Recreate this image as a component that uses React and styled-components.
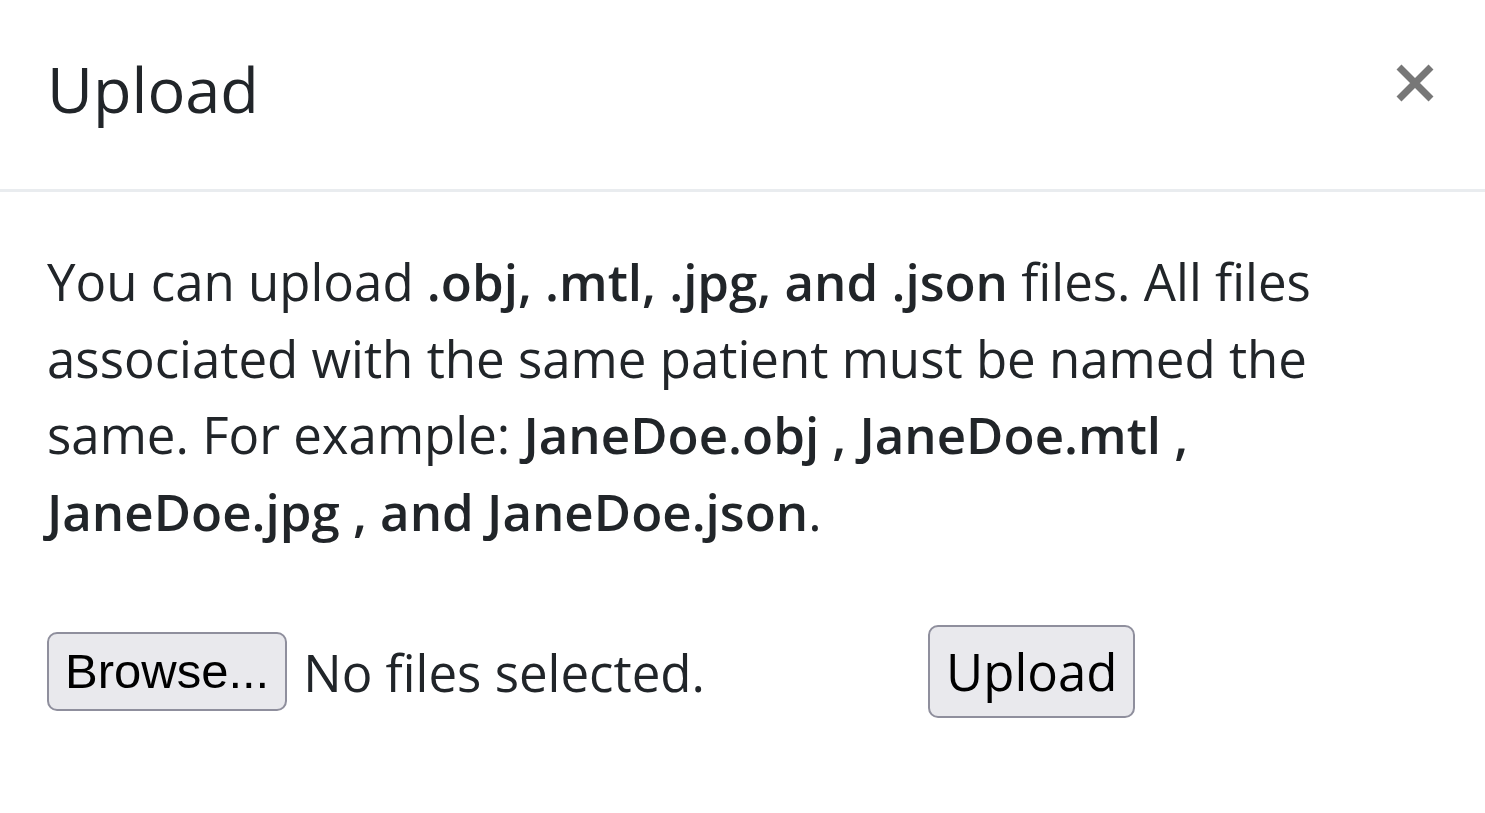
import React from 'react';
import styled, { createGlobalStyle } from 'styled-components';

const GlobalStyle = createGlobalStyle`
  html, body {
    margin: 0;
    padding: 0;
    background: #ffffff;
  }
  body {
    font-family: "Open Sans", "Noto Sans", sans-serif;
    color: #212529;
  }
`;

// Modal shell
const Modal = styled.div`
  width: 1485px;
  min-height: 813px;
  background: #fff;
`;

const Header = styled.header`
  display: flex;
  align-items: flex-start;
  justify-content: space-between;
  height: 192px;
  box-sizing: border-box;
  padding: 42px 50px 0 47px;
  border-bottom: 3px solid #e9ecef;
`;

const Title = styled.h5`
  margin: 0;
  font-size: 63px;
  font-weight: 400;
  line-height: 1.5;
  color: #212529;
`;

const CloseButton = styled.button`
  display: flex;
  align-items: center;
  justify-content: center;
  margin-top: 21px;
  padding: 0;
  border: 0;
  background: transparent;
  cursor: pointer;
`;

const Body = styled.div`
  padding: 51px 47px;
`;

const Text = styled.p`
  margin: 0;
  font-size: 51px;
  line-height: 1.5;
  max-width: 1300px;

  b {
    font-weight: 600;
  }
`;

const Form = styled.form`
  display: flex;
  align-items: center;
  margin-top: 76px;
`;

// Native-looking file input: grey button plus status label
const FileField = styled.label`
  display: flex;
  align-items: center;
  gap: 16px;
  width: 881px;
`;

const NativeButton = styled.button`
  box-sizing: border-box;
  height: ${p => p.$h}px;
  padding: 0 ${p => p.$px}px;
  border: 2px solid #8f8f9d;
  border-radius: 10px;
  background: #e9e9ed;
  color: #000;
  font-family: ${p => (p.$system ? '"Liberation Sans", Arial, sans-serif' : '"Open Sans", sans-serif')};
  font-size: ${p => p.$fs}px;
  line-height: 1;
  cursor: pointer;
`;

const Status = styled.span`
  font-size: 51px;
  color: #212529;
`;

const CloseIcon = () => (
  <svg width="40" height="40" viewBox="0 0 40 40">
    <path d="M4 4 L36 36 M36 4 L4 36" stroke="#777" strokeWidth="7" fill="none" />
  </svg>
);

const App = () => {
  return (
    <>
      <GlobalStyle />
      <Modal>
        <Header>
          <Title>Upload</Title>
          <CloseButton aria-label="Close">
            <CloseIcon />
          </CloseButton>
        </Header>
        <Body>
          <Text>
            You can upload <b>.obj, .mtl, .jpg, and .json</b> files. All files associated with the
            same patient must be named the same. For example:{' '}
            <b>JaneDoe.obj , JaneDoe.mtl , JaneDoe.jpg , and JaneDoe.json</b>.
          </Text>
          <Form onSubmit={e => e.preventDefault()}>
            <FileField>
              <NativeButton type="button" $system $h={79} $px={16} $fs={49}>
                Browse...
              </NativeButton>
              <Status>No files selected.</Status>
            </FileField>
            <NativeButton type="submit" $h={93} $px={16} $fs={51}>
              Upload
            </NativeButton>
          </Form>
        </Body>
      </Modal>
    </>
  );
};

export default App;
